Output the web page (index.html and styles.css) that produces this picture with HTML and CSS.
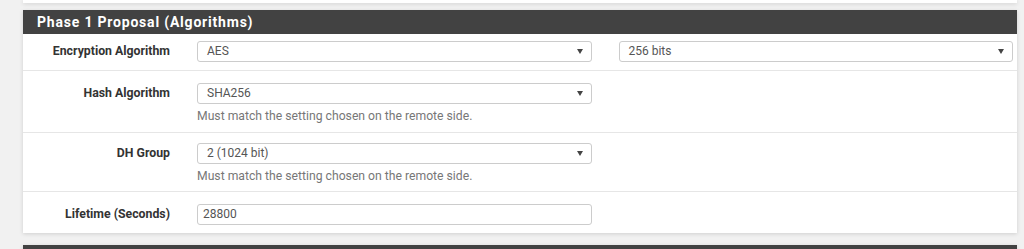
FILE: index.html
```html
<!DOCTYPE html>
<html>
<head>
<meta charset="utf-8">
<link rel="stylesheet" href="styles.css">
</head>
<body>
<div class="page">
  <div class="panel panel-prev"></div>
  <div class="panel">
    <div class="panel-heading">Phase 1 Proposal (Algorithms)</div>
    <div class="form-row form-row-first">
      <div class="form-label">Encryption Algorithm</div>
      <div class="form-fields two">
        <div class="select"><span>AES</span><i class="caret"></i></div>
        <div class="select"><span>256 bits</span><i class="caret"></i></div>
      </div>
    </div>
    <div class="form-row">
      <div class="form-label">Hash Algorithm</div>
      <div class="form-fields two">
        <div class="field">
          <div class="select"><span>SHA256</span><i class="caret"></i></div>
          <div class="help">Must match the setting chosen on the remote side.</div>
        </div>
      </div>
    </div>
    <div class="form-row form-row-tight">
      <div class="form-label">DH Group</div>
      <div class="form-fields two">
        <div class="field">
          <div class="select"><span>2 (1024 bit)</span><i class="caret"></i></div>
          <div class="help">Must match the setting chosen on the remote side.</div>
        </div>
      </div>
    </div>
    <div class="form-row">
      <div class="form-label">Lifetime (Seconds)</div>
      <div class="form-fields two">
        <div class="input">28800</div>
      </div>
    </div>
  </div>
  <div class="panel panel-next">
    <div class="panel-heading"></div>
  </div>
</div>
</body>
</html>
```
FILE: styles.css
```css
html, body {
  margin: 0;
  padding: 0;
  background: #f1f1f1;
  font-family: Roboto, "Liberation Sans", sans-serif;
  overflow: hidden;
}
.page {
  padding: 0 7px 0 23px;
  display: flex;
  flex-direction: column;
  gap: 7px;
}
.panel {
  background: #fff;
  box-shadow: 0 1px 4px rgba(0, 0, 0, 0.14);
}
.panel-prev {
  height: 3px;
}
.panel-heading {
  background: #424242;
  color: #fff;
  font-weight: bold;
  font-size: 14px;
  letter-spacing: 0.8px;
  height: 24px;
  line-height: 24px;
  padding-left: 14px;
}
.form-row {
  display: flex;
  align-items: flex-start;
  padding: 12px 4px 8px 0;
  border-top: 1px solid #e6e6e6;
}
.form-row-first {
  border-top: none;
  padding-top: 7px;
}
.form-row-tight {
  padding-top: 10px;
  padding-bottom: 7px;
}
.form-label {
  width: 147px;
  padding-right: 27px;
  text-align: right;
  font-weight: bold;
  font-size: 12.3px;
  color: #333;
  line-height: 21px;
}
.form-fields {
  flex: 1;
}
.form-fields.two {
  display: grid;
  grid-template-columns: 1fr 1fr;
  column-gap: 27px;
}
.select, .input {
  height: 19px;
  border: 1px solid #ccc;
  border-radius: 3px;
  font-size: 12px;
  color: #555;
  line-height: 19px;
  display: flex;
  align-items: center;
  justify-content: space-between;
  padding: 0 8px 0 9px;
}
.input {
  padding-left: 5px;
}
.caret {
  width: 0;
  height: 0;
  border-left: 3px solid transparent;
  border-right: 3px solid transparent;
  border-top: 5px solid #444;
}
.help {
  font-size: 12.2px;
  color: #777;
  margin-top: 4px;
  line-height: 16px;
}
.panel-next {
  margin-top: 5px;
}
```
